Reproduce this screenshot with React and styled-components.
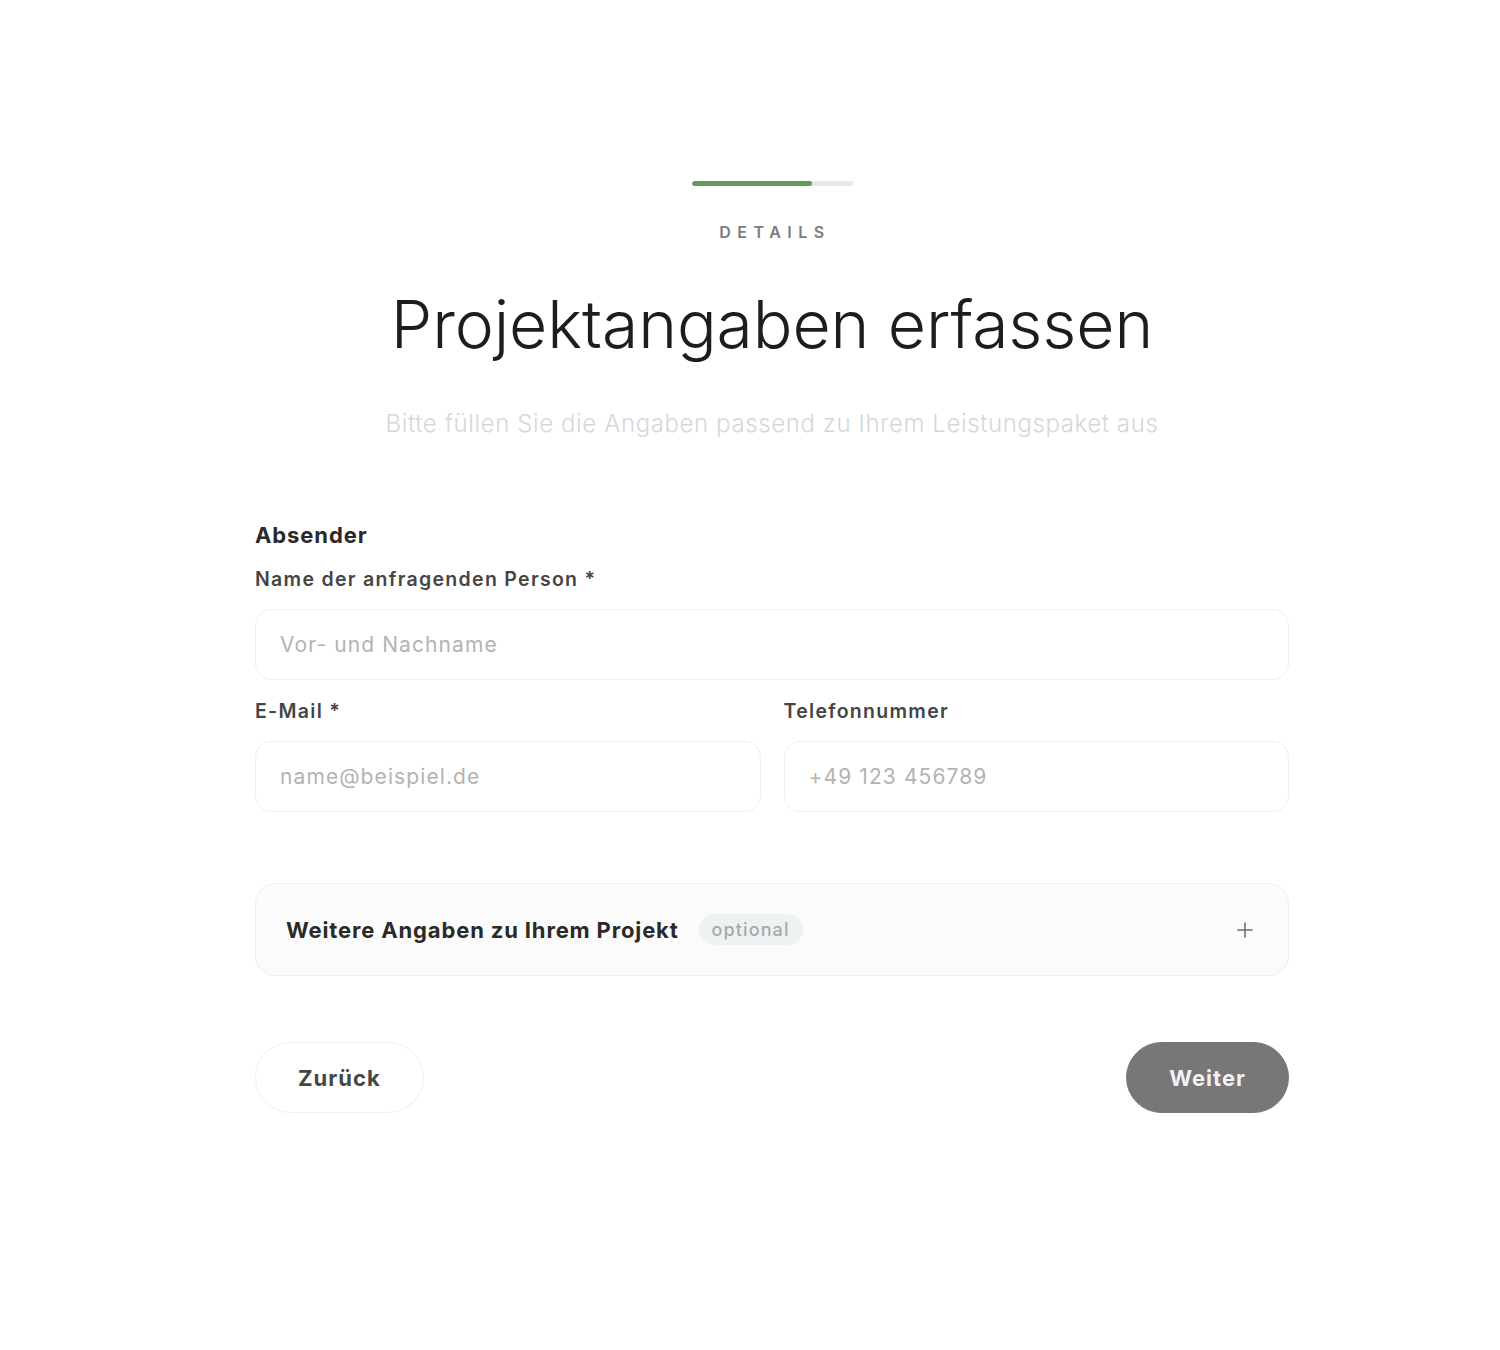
import React from "react";
import styled, { createGlobalStyle } from "styled-components";

const GlobalStyle = createGlobalStyle`
  body {
    margin: 0;
    background: #ffffff;
    font-family: Inter, "Liberation Sans", sans-serif;
    color: #2b2b2b;
  }
  * { box-sizing: border-box; }
`;

const Page = styled.main`
  padding: 181px 0 0 44px;
  display: flex;
  justify-content: center;
`;

const Wizard = styled.div`
  width: 1034px;
  display: flex;
  flex-direction: column;
  align-items: stretch;
`;

const Header = styled.header`
  display: flex;
  flex-direction: column;
  align-items: center;
`;

const Progress = styled.div`
  width: 161px;
  height: 5px;
  border-radius: 3px;
  background: #e8e8e8;
  overflow: hidden;
`;

const ProgressFill = styled.div`
  height: 100%;
  background: #64985d;
  border-radius: 3px;
`;

const Step = styled.div`
  margin-top: 36px;
  padding-left: 6px;
  font-size: 16px;
  font-weight: 600;
  letter-spacing: 6.5px;
  color: #7a7d80;
  line-height: 20px;
`;

const Title = styled.h1`
  margin: 42px 0 0;
  font-size: 66px;
  font-weight: 300;
  line-height: 80px;
  color: #1d1d1d;
  letter-spacing: -0.1px;
`;

const Subtitle = styled.p`
  margin: 45px 0 0;
  font-size: 24px;
  font-weight: 300;
  line-height: 30px;
  letter-spacing: 0.6px;
  color: #d5d8da;
`;

const Form = styled.form`
  margin-top: 83px;
  display: flex;
  flex-direction: column;
`;

const Section = styled.h2`
  margin: 0 0 19px;
  font-size: 22px;
  font-weight: 700;
  line-height: 26px;
  letter-spacing: 0.9px;
  color: #2a2a2a;
`;

const Row = styled.div`
  display: grid;
  grid-template-columns: ${({ $cols }) => `repeat(${$cols || 1}, 1fr)`};
  column-gap: 23px;
  margin-bottom: 19px;
`;

const Field = styled.label`
  display: flex;
  flex-direction: column;
`;

const Label = styled.span`
  font-size: 19.5px;
  font-weight: 600;
  line-height: 24px;
  letter-spacing: 1.3px;
  color: #454545;
  margin-bottom: 18px;
`;

const Input = styled.input`
  height: 71px;
  padding: 0 24px;
  border: 1.5px solid #efefef;
  border-radius: 16px;
  background: #ffffff;
  font-family: inherit;
  font-size: 21px;
  letter-spacing: 1.1px;
  color: #333;
  outline: none;

  &::placeholder {
    color: #b3b3b3;
  }
`;

const Accordion = styled.button`
  margin-top: 52px;
  height: 93px;
  padding: 0 33px 0 30px;
  display: flex;
  align-items: center;
  border: 1.5px solid #efefef;
  border-radius: 20px;
  background: #fbfbfb;
  font-family: inherit;
  text-align: left;
  cursor: pointer;
`;

const AccordionTitle = styled.span`
  font-size: 22px;
  font-weight: 700;
  letter-spacing: 0.85px;
  color: #2a2a2a;
`;

const Badge = styled.span`
  margin-left: 20px;
  padding: 5px 13px;
  border-radius: 16px;
  background: #eef2f2;
  font-size: 18px;
  font-weight: 500;
  letter-spacing: 1.1px;
  color: #a3abab;
`;

const PlusIcon = styled.svg`
  margin-left: auto;
  width: 20px;
  height: 20px;
`;

const Actions = styled.div`
  margin-top: 66px;
  display: flex;
  justify-content: space-between;
`;

const Button = styled.button`
  height: 71px;
  padding: 0 42px;
  border-radius: 36px;
  font-family: inherit;
  font-size: 22px;
  font-weight: 700;
  letter-spacing: 1px;
  cursor: pointer;
  border: 1.5px solid ${({ $primary }) => ($primary ? "#777777" : "#efefef")};
  background: ${({ $primary }) => ($primary ? "#777777" : "#ffffff")};
  color: ${({ $primary }) => ($primary ? "#f2f2f2" : "#464646")};
`;

const App = () => {
  const progress = 75;

  return (
    <>
      <GlobalStyle />
      <Page>
        <Wizard>
          <Header>
            <Progress>
              <ProgressFill style={{ width: `${progress}%` }} />
            </Progress>
            <Step>DETAILS</Step>
            <Title>Projektangaben erfassen</Title>
            <Subtitle>
              Bitte füllen Sie die Angaben passend zu Ihrem Leistungspaket aus
            </Subtitle>
          </Header>

          <Form onSubmit={(e) => e.preventDefault()}>
            <Section>Absender</Section>
            <Row>
              <Field>
                <Label>Name der anfragenden Person *</Label>
                <Input placeholder="Vor- und Nachname" />
              </Field>
            </Row>
            <Row $cols={2}>
              <Field>
                <Label>E-Mail *</Label>
                <Input type="email" placeholder="name@beispiel.de" />
              </Field>
              <Field>
                <Label>Telefonnummer</Label>
                <Input type="tel" placeholder="+49 123 456789" />
              </Field>
            </Row>

            <Accordion type="button">
              <AccordionTitle>Weitere Angaben zu Ihrem Projekt</AccordionTitle>
              <Badge>optional</Badge>
              <PlusIcon viewBox="0 0 20 20" fill="none">
                <path
                  d="M10 3v14M3 10h14"
                  stroke="#6e6e6e"
                  strokeWidth="1.6"
                  strokeLinecap="round"
                />
              </PlusIcon>
            </Accordion>

            <Actions>
              <Button type="button">Zurück</Button>
              <Button type="submit" $primary>
                Weiter
              </Button>
            </Actions>
          </Form>
        </Wizard>
      </Page>
    </>
  );
};

export default App;
